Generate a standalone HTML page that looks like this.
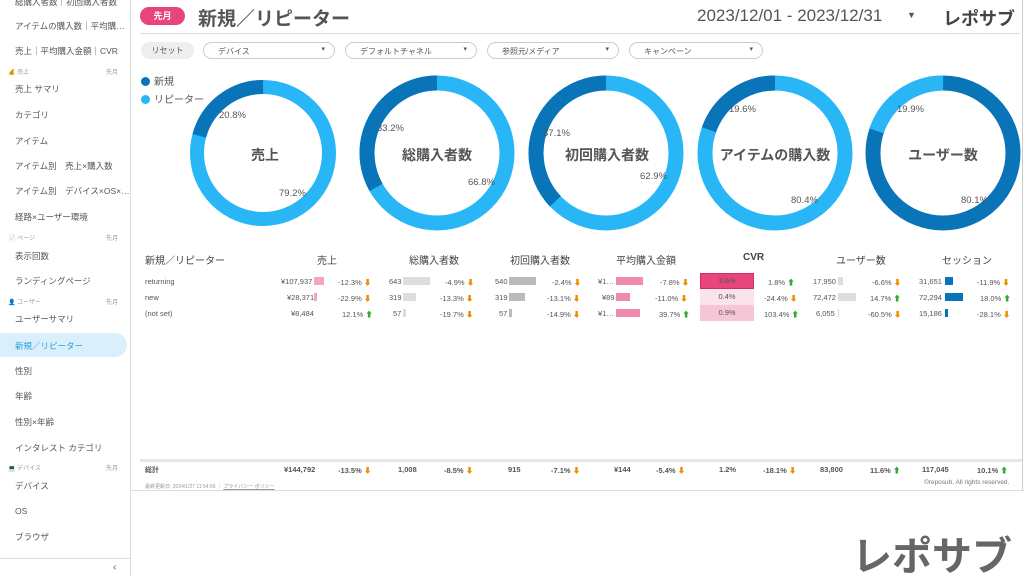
<!DOCTYPE html><html><head><meta charset="utf-8"><style>
*{margin:0;padding:0;box-sizing:border-box}
body{width:1024px;height:576px;overflow:hidden;background:#fff;font-family:"Liberation Sans","Noto Sans CJK JP",sans-serif;color:#555;position:relative}
.sb{position:absolute;left:0;top:0;width:131px;height:576px;border-right:1px solid #ddd;font-size:8.5px;color:#555}
.sb div{position:absolute;left:15px;white-space:nowrap}
.sec{font-size:6px;color:#999;left:8px!important;width:110px}
.sec span{position:absolute;right:0}
.act{left:0!important;width:127px;height:24px;background:#d9effb;border-radius:0 12px 12px 0;color:#2a9ad6;padding:7px 15px}
.a{position:absolute;white-space:nowrap}
.dd{position:absolute;top:42px;height:17px;border:1px solid #ccc;border-radius:9px;font-size:8px;padding:3px 14px;color:#555}
.dd:after{content:"▾";position:absolute;right:9px;top:2px;font-size:7px}
.t{position:absolute;font-size:7.5px;color:#555;white-space:nowrap}
.h{position:absolute;font-size:10px;color:#444;top:252px}
.bar{position:absolute;height:8px}
.dn{color:#f08c00}.up{color:#3a3}
.dot{display:inline-block;width:9px;height:9px;border-radius:50%;margin-right:4px;vertical-align:-1px}
</style></head><body>
<div class="sb">
<div style="top:-4px">総購入者数｜初回購入者数</div>
<div style="top:20px">アイテムの購入数｜平均購…</div>
<div style="top:45px">売上｜平均購入金額｜CVR</div>
<div class="sec" style="top:67px">💰 売上<span>先月</span></div>
<div style="top:83px">売上 サマリ</div>
<div style="top:109px">カテゴリ</div>
<div style="top:135px">アイテム</div>
<div style="top:160px">アイテム別　売上×購入数</div>
<div style="top:185px">アイテム別　デバイス×OS×…</div>
<div style="top:211px">経路×ユーザー環境</div>
<div class="sec" style="top:233px">📄 ページ<span>先月</span></div>
<div style="top:250px">表示回数</div>
<div style="top:275px">ランディングページ</div>
<div class="sec" style="top:297px">👤 ユーザー<span>先月</span></div>
<div style="top:313px">ユーザーサマリ</div>
<div class="act" style="top:333px">新規／リピーター</div>
<div style="top:365px">性別</div>
<div style="top:390px">年齢</div>
<div style="top:416px">性別×年齢</div>
<div style="top:442px">インタレスト カテゴリ</div>
<div class="sec" style="top:463px">💻 デバイス<span>先月</span></div>
<div style="top:480px">デバイス</div>
<div style="top:506px">OS</div>
<div style="top:531px">ブラウザ</div>
<div style="left:0;top:558px;width:130px;border-top:1px solid #ddd;height:18px"></div>
<div style="left:113px;top:562px;font-size:10px">‹</div>
</div>
<div class="a" style="left:140px;top:7px;width:45px;height:18px;background:#e8457c;border-radius:9px;color:#fff;font-size:9px;text-align:center;line-height:18px;font-weight:bold">先月</div>
<div class="a" style="left:198px;top:4px;font-size:19px;font-weight:bold;color:#555">新規／リピーター</div>
<div class="a" style="left:697px;top:6px;font-size:17px;color:#555">2023/12/01 - 2023/12/31</div>
<div class="a" style="left:907px;top:10px;font-size:9px;color:#555">▼</div>
<div class="a" style="left:943px;top:5px;font-size:18px;font-weight:bold;color:#444">レポサブ</div>
<div class="a" style="left:140px;top:33px;width:880px;border-top:1px solid #ddd"></div>
<div class="a" style="left:141px;top:42px;width:53px;height:17px;background:#eee;border-radius:9px;font-size:8px;text-align:center;line-height:17px">リセット</div>
<div class="dd" style="left:203px;width:132px">デバイス</div>
<div class="dd" style="left:345px;width:132px">デフォルトチャネル</div>
<div class="dd" style="left:487px;width:132px">参照元/メディア</div>
<div class="dd" style="left:629px;width:134px">キャンペーン</div>
<div class="a" style="left:141px;top:74px;font-size:10px;line-height:18px"><span class="dot" style="background:#0a74b8"></span>新規<br><span class="dot" style="background:#29b6f6"></span>リピーター</div>
<svg class="a" style="left:0;top:0" width="1024" height="240">
<g fill="none" stroke-width="15">
<circle cx="263" cy="153" r="66" stroke="#29b6f6" stroke-width="14"/>
<circle cx="263" cy="153" r="66" stroke="#0a74b8" stroke-width="14" stroke-dasharray="86.3 500" transform="rotate(-164.9 263 153)"/>
<circle cx="437" cy="153" r="70" stroke="#29b6f6"/>
<circle cx="437" cy="153" r="70" stroke="#0a74b8" stroke-dasharray="146 500" transform="rotate(-209.5 437 153)"/>
<circle cx="606" cy="153" r="70" stroke="#29b6f6"/>
<circle cx="606" cy="153" r="70" stroke="#0a74b8" stroke-dasharray="163.2 500" transform="rotate(-223.6 606 153)"/>
<circle cx="775" cy="153" r="70" stroke="#29b6f6"/>
<circle cx="775" cy="153" r="70" stroke="#0a74b8" stroke-dasharray="86.2 500" transform="rotate(-160.6 775 153)"/>
<circle cx="943" cy="153" r="70" stroke="#0a74b8"/>
<circle cx="943" cy="153" r="70" stroke="#29b6f6" stroke-dasharray="87.5 500" transform="rotate(-161.6 943 153)"/>
</g>
<g font-size="14" font-weight="bold" fill="#555" text-anchor="middle" font-family="Liberation Sans,Noto Sans CJK JP,sans-serif">
<text x="265" y="160">売上</text><text x="437" y="160">総購入者数</text><text x="607" y="160">初回購入者数</text><text x="775" y="160">アイテムの購入数</text><text x="943" y="160">ユーザー数</text></g>
<g font-size="9.5" fill="#555" font-family="Liberation Sans,sans-serif">
<text x="219" y="118">20.8%</text><text x="279" y="196">79.2%</text>
<text x="377" y="131">33.2%</text><text x="468" y="185">66.8%</text>
<text x="543" y="136">37.1%</text><text x="640" y="179">62.9%</text>
<text x="729" y="112">19.6%</text><text x="791" y="203">80.4%</text>
<text x="897" y="112">19.9%</text><text x="961" y="203">80.1%</text></g>
</svg>
<div class="h" style="left:145px">新規／リピーター</div>
<div class="h" style="left:317px">売上</div>
<div class="h" style="left:409px">総購入者数</div>
<div class="h" style="left:510px">初回購入者数</div>
<div class="h" style="left:616px">平均購入金額</div>
<div class="h" style="left:743px;font-weight:bold">CVR</div>
<div class="h" style="left:836px">ユーザー数</div>
<div class="h" style="left:942px">セッション</div>
<div class="t" style="left:145px;top:277px">returning</div>
<div class="t" style="left:145px;top:293px">new</div>
<div class="t" style="left:145px;top:309px">(not set)</div>
<div class="t" style="left:281px;top:277px">¥107,937</div><div class="bar" style="left:314px;top:277px;width:10px;background:#f4a6c0"></div>
<div class="t" style="left:287px;top:293px">¥28,371</div><div class="bar" style="left:314px;top:293px;width:3px;background:#f4a6c0"></div>
<div class="t" style="left:291px;top:309px">¥8,484</div>
<div class="t" style="left:338px;top:277px">-12.3% <span class="dn">⬇</span></div>
<div class="t" style="left:338px;top:293px">-22.9% <span class="dn">⬇</span></div>
<div class="t" style="left:342px;top:309px">12.1% <span class="up">⬆</span></div>
<div class="t" style="left:389px;top:277px">643</div><div class="bar" style="left:403px;top:277px;width:27px;background:#ddd"></div>
<div class="t" style="left:389px;top:293px">319</div><div class="bar" style="left:403px;top:293px;width:13px;background:#ddd"></div>
<div class="t" style="left:393px;top:309px">57</div><div class="bar" style="left:403px;top:309px;width:3px;background:#ddd"></div>
<div class="t" style="left:445px;top:277px">-4.9% <span class="dn">⬇</span></div>
<div class="t" style="left:440px;top:293px">-13.3% <span class="dn">⬇</span></div>
<div class="t" style="left:440px;top:309px">-19.7% <span class="dn">⬇</span></div>
<div class="t" style="left:495px;top:277px">540</div><div class="bar" style="left:509px;top:277px;width:27px;background:#bbb"></div>
<div class="t" style="left:495px;top:293px">319</div><div class="bar" style="left:509px;top:293px;width:16px;background:#bbb"></div>
<div class="t" style="left:499px;top:309px">57</div><div class="bar" style="left:509px;top:309px;width:3px;background:#bbb"></div>
<div class="t" style="left:552px;top:277px">-2.4% <span class="dn">⬇</span></div>
<div class="t" style="left:547px;top:293px">-13.1% <span class="dn">⬇</span></div>
<div class="t" style="left:547px;top:309px">-14.9% <span class="dn">⬇</span></div>
<div class="t" style="left:598px;top:277px">¥1…</div><div class="bar" style="left:616px;top:277px;width:27px;background:#f08bb0"></div>
<div class="t" style="left:602px;top:293px">¥89</div><div class="bar" style="left:616px;top:293px;width:14px;background:#f08bb0"></div>
<div class="t" style="left:598px;top:309px">¥1…</div><div class="bar" style="left:616px;top:309px;width:24px;background:#f08bb0"></div>
<div class="t" style="left:660px;top:277px">-7.8% <span class="dn">⬇</span></div>
<div class="t" style="left:655px;top:293px">-11.0% <span class="dn">⬇</span></div>
<div class="t" style="left:659px;top:309px">39.7% <span class="up">⬆</span></div>
<div class="a" style="left:700px;top:273px;width:54px;height:16px;background:#e8457c;border:1px solid #c8305f;font-size:7.5px;text-align:center;line-height:14px;color:#555">3.6%</div>
<div class="a" style="left:700px;top:289px;width:54px;height:16px;background:#fbe3ec;font-size:7.5px;text-align:center;line-height:16px">0.4%</div>
<div class="a" style="left:700px;top:305px;width:54px;height:16px;background:#f6c6d7;font-size:7.5px;text-align:center;line-height:16px">0.9%</div>
<div class="t" style="left:768px;top:277px">1.8% <span class="up">⬆</span></div>
<div class="t" style="left:764px;top:293px">-24.4% <span class="dn">⬇</span></div>
<div class="t" style="left:764px;top:309px">103.4% <span class="up">⬆</span></div>
<div class="t" style="left:813px;top:277px">17,950</div><div class="bar" style="left:838px;top:277px;width:5px;background:#ddd"></div>
<div class="t" style="left:813px;top:293px">72,472</div><div class="bar" style="left:838px;top:293px;width:18px;background:#ddd"></div>
<div class="t" style="left:816px;top:309px">6,055</div><div class="bar" style="left:838px;top:309px;width:1px;background:#ddd"></div>
<div class="t" style="left:872px;top:277px">-6.6% <span class="dn">⬇</span></div>
<div class="t" style="left:870px;top:293px">14.7% <span class="up">⬆</span></div>
<div class="t" style="left:868px;top:309px">-60.5% <span class="dn">⬇</span></div>
<div class="t" style="left:919px;top:277px">31,651</div><div class="bar" style="left:945px;top:277px;width:8px;background:#0a74b8"></div>
<div class="t" style="left:919px;top:293px">72,294</div><div class="bar" style="left:945px;top:293px;width:18px;background:#0a74b8"></div>
<div class="t" style="left:919px;top:309px">15,186</div><div class="bar" style="left:945px;top:309px;width:3px;background:#0a74b8"></div>
<div class="t" style="left:977px;top:277px">-11.9% <span class="dn">⬇</span></div>
<div class="t" style="left:980px;top:293px">18.0% <span class="up">⬆</span></div>
<div class="t" style="left:977px;top:309px">-28.1% <span class="dn">⬇</span></div>
<div class="a" style="left:140px;top:459px;width:882px;height:3px;background:#e6e6e6"></div>
<div class="t" style="top:465px;left:145px;font-size:7px;font-weight:bold">総計</div>
<div class="t" style="top:465px;left:284px;font-weight:bold">¥144,792</div>
<div class="t" style="top:465px;left:338px;font-weight:bold">-13.5% <span class="dn">⬇</span></div>
<div class="t" style="top:465px;left:398px;font-weight:bold">1,008</div>
<div class="t" style="top:465px;left:444px;font-weight:bold">-8.5% <span class="dn">⬇</span></div>
<div class="t" style="top:465px;left:508px;font-weight:bold">915</div>
<div class="t" style="top:465px;left:551px;font-weight:bold">-7.1% <span class="dn">⬇</span></div>
<div class="t" style="top:465px;left:614px;font-weight:bold">¥144</div>
<div class="t" style="top:465px;left:656px;font-weight:bold">-5.4% <span class="dn">⬇</span></div>
<div class="t" style="top:465px;left:719px;font-weight:bold">1.2%</div>
<div class="t" style="top:465px;left:763px;font-weight:bold">-18.1% <span class="dn">⬇</span></div>
<div class="t" style="top:465px;left:820px;font-weight:bold">83,800</div>
<div class="t" style="top:465px;left:870px;font-weight:bold">11.6% <span class="up">⬆</span></div>
<div class="t" style="top:465px;left:922px;font-weight:bold">117,045</div>
<div class="t" style="top:465px;left:977px;font-weight:bold">10.1% <span class="up">⬆</span></div>
<div class="t" style="top:483px;left:145px;font-size:5px;color:#999">最終更新日: 2024/1/27 11:54:56 ｜ <u>プライバシー ポリシー</u></div>
<div class="t" style="top:479px;left:924px;font-size:6.5px;color:#777">©reposub. All rights reserved.</div>
<div class="a" style="left:131px;top:490px;width:893px;border-top:1px solid #ddd"></div>
<div class="a" style="left:1022px;top:0;width:1px;height:490px;background:#ccc"></div>
<div class="a" style="left:852px;top:524px;font-size:40px;font-weight:bold;color:#666">レポサブ</div>
</body></html>
